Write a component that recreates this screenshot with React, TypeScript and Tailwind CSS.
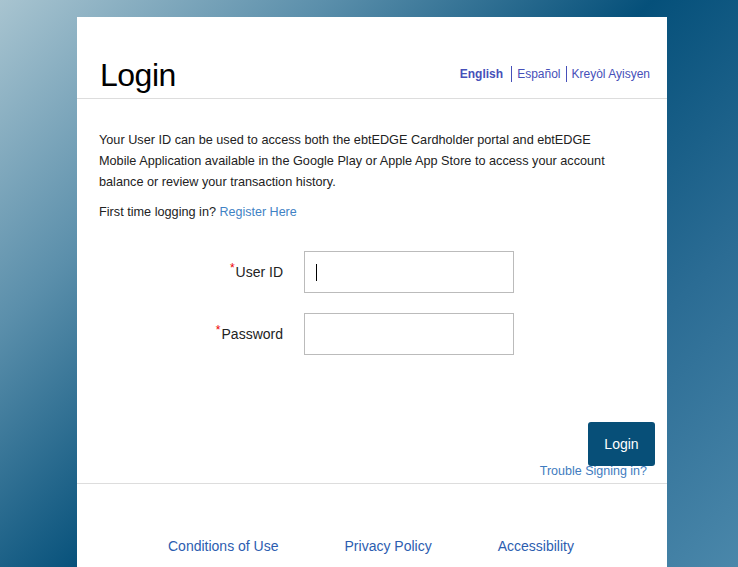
export default function App() {
  return (
    <div
      className="w-[738px] h-[567px] overflow-hidden bg-[linear-gradient(135deg,#a8c4d0_0%,#5b8fab_25%,#05507a_50%,#2b6c94_75%,#4a87aa_100%)] pt-[17px] pl-[77px]"
      style={{ fontFamily: "'Liberation Sans', Arial, sans-serif" }}
    >
      <div className="w-[590px] h-[600px] bg-white">
        <div className="flex items-end justify-between h-[82px] border-b border-[#dddddd] px-[23px] pb-[6px]">
          <h1 className="text-[32px] leading-none text-black tracking-[-0.5px] mb-[1px]">Login</h1>
          <div className="flex items-center text-[12px] text-[#4650b9] mb-[10px] mr-[-6px]">
            <span className="font-bold pr-[8px] border-r border-[#4650b9] leading-[16px]">English</span>
            <span className="px-[5px] border-r border-[#4650b9] leading-[16px]">Español</span>
            <span className="pl-[5px] leading-[16px]">Kreyòl Ayisyen</span>
          </div>
        </div>

        <div className="px-[22px] pt-[31px]">
          <p className="w-[520px] text-[12.7px] leading-[21px] text-[#222]">
            Your User ID can be used to access both the ebtEDGE Cardholder portal and ebtEDGE Mobile Application available in the Google Play or Apple App Store to access your account balance or review your transaction history.
          </p>
          <p className="text-[12.7px] leading-[21px] text-[#222] mt-[9px]">
            First time logging in? <span className="text-[12.5px] text-[#3f82c4]">Register Here</span>
          </p>

          <div className="mt-[28px] flex flex-col gap-[20px]">
            <div className="flex items-center">
              <label className="w-[184px] text-right text-[14px] text-[#222]">
                <span className="text-[#e00] text-[12px] align-top relative top-[-3px] mr-[1px]">*</span>User ID
              </label>
              <div className="ml-[21px] w-[210px] h-[42px] border border-[#bbbbbb] flex items-center pl-[11px]">
                <div className="w-px h-[17px] bg-black" />
              </div>
            </div>
            <div className="flex items-center">
              <label className="w-[184px] text-right text-[14px] text-[#222]">
                <span className="text-[#e00] text-[12px] align-top relative top-[-3px] mr-[1px]">*</span>Password
              </label>
              <div className="ml-[21px] w-[210px] h-[42px] border border-[#bbbbbb]" />
            </div>
          </div>
        </div>

        <div className="flex flex-col items-end pr-[12px] mt-[67px]">
          <button className="w-[67px] h-[44px] bg-[#074f78] text-white text-[14px] rounded-[3px]">Login</button>
          <span className="text-[12.5px] text-[#3f7cc0] mr-[8px] mt-[-2px] leading-[14px]">Trouble Signing in?</span>
        </div>

        <div className="border-t border-[#dddddd] mt-[5px] pt-[52px] flex text-[14px] text-[#2c5db0]">
          <span className="ml-[91px]">Conditions of Use</span>
          <span className="ml-[66px]">Privacy Policy</span>
          <span className="ml-[66px]">Accessibility</span>
        </div>
      </div>
    </div>
  );
}
